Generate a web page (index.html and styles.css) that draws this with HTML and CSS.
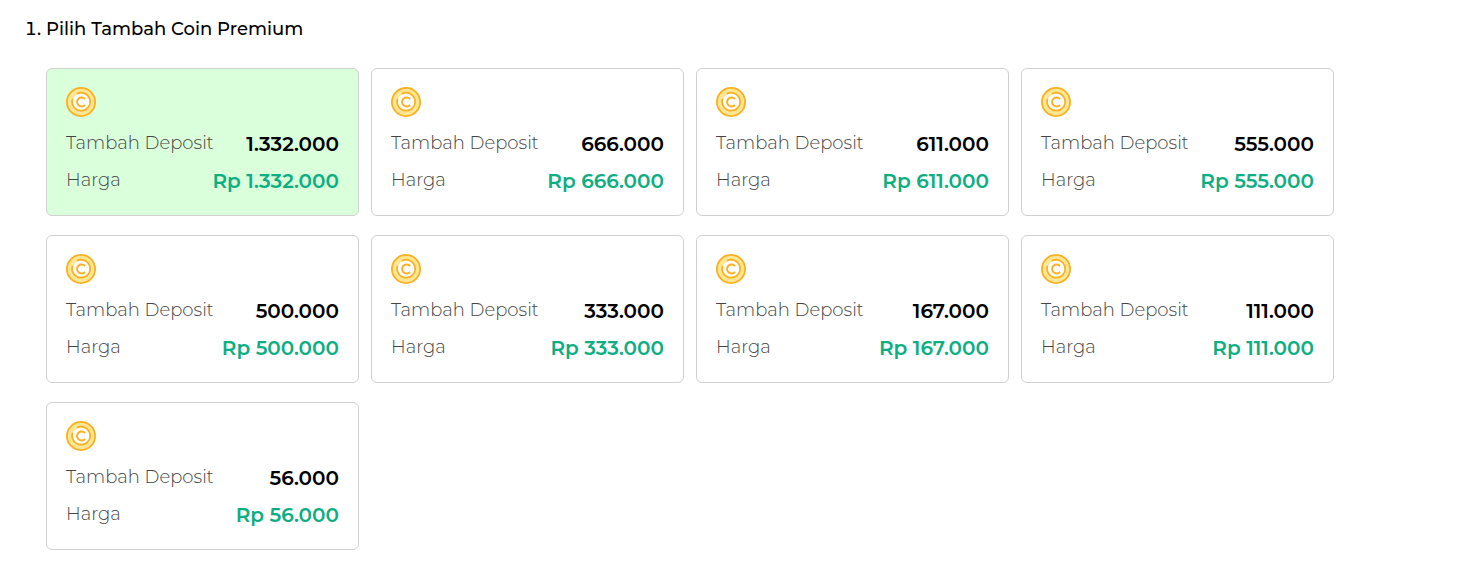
FILE: index.html
```html
<!DOCTYPE html>
<html lang="id">
<head>
  <meta charset="UTF-8" />
  <meta name="viewport" content="width=device-width, initial-scale=1.0"/>
  <title>Tambah Coin Premium</title>
  <link rel="stylesheet" href="styles.css">
</head>
<body>
  <!-- Coin icon, shared by every card -->
  <svg class="sprite" width="0" height="0" aria-hidden="true">
    <symbol id="coin" viewBox="0 0 30 30">
      <circle cx="15" cy="15" r="14.1" fill="#ffe694" stroke="#fbb01f" stroke-width="1.8"/>
      <circle cx="15" cy="15" r="8.6" fill="#fff"/>
      <path d="M10.8 6.8A9 9 0 1 1 6.6 11.8" fill="none" stroke="#fbb01f" stroke-width="1.7"/>
      <path d="M19 12.1A4.5 4.5 0 1 0 19 17.9" fill="none" stroke="#fbb01f" stroke-width="1.9"/>
    </symbol>
  </svg>

  <ol class="steps">
    <li>
      <h1>Pilih Tambah Coin Premium</h1>
      <div class="card-list">
        <button type="button" class="card active" aria-pressed="true">
          <svg class="coin"><use href="#coin"/></svg>
          <span class="row"><span class="label">Tambah Deposit</span><span class="amount">1.332.000</span></span>
          <span class="row"><span class="label">Harga</span><span class="price">Rp 1.332.000</span></span>
        </button>
        <button type="button" class="card" aria-pressed="false">
          <svg class="coin"><use href="#coin"/></svg>
          <span class="row"><span class="label">Tambah Deposit</span><span class="amount">666.000</span></span>
          <span class="row"><span class="label">Harga</span><span class="price">Rp 666.000</span></span>
        </button>
        <button type="button" class="card" aria-pressed="false">
          <svg class="coin"><use href="#coin"/></svg>
          <span class="row"><span class="label">Tambah Deposit</span><span class="amount">611.000</span></span>
          <span class="row"><span class="label">Harga</span><span class="price">Rp 611.000</span></span>
        </button>
        <button type="button" class="card" aria-pressed="false">
          <svg class="coin"><use href="#coin"/></svg>
          <span class="row"><span class="label">Tambah Deposit</span><span class="amount">555.000</span></span>
          <span class="row"><span class="label">Harga</span><span class="price">Rp 555.000</span></span>
        </button>
        <button type="button" class="card" aria-pressed="false">
          <svg class="coin"><use href="#coin"/></svg>
          <span class="row"><span class="label">Tambah Deposit</span><span class="amount">500.000</span></span>
          <span class="row"><span class="label">Harga</span><span class="price">Rp 500.000</span></span>
        </button>
        <button type="button" class="card" aria-pressed="false">
          <svg class="coin"><use href="#coin"/></svg>
          <span class="row"><span class="label">Tambah Deposit</span><span class="amount">333.000</span></span>
          <span class="row"><span class="label">Harga</span><span class="price">Rp 333.000</span></span>
        </button>
        <button type="button" class="card" aria-pressed="false">
          <svg class="coin"><use href="#coin"/></svg>
          <span class="row"><span class="label">Tambah Deposit</span><span class="amount">167.000</span></span>
          <span class="row"><span class="label">Harga</span><span class="price">Rp 167.000</span></span>
        </button>
        <button type="button" class="card" aria-pressed="false">
          <svg class="coin"><use href="#coin"/></svg>
          <span class="row"><span class="label">Tambah Deposit</span><span class="amount">111.000</span></span>
          <span class="row"><span class="label">Harga</span><span class="price">Rp 111.000</span></span>
        </button>
        <button type="button" class="card" aria-pressed="false">
          <svg class="coin"><use href="#coin"/></svg>
          <span class="row"><span class="label">Tambah Deposit</span><span class="amount">56.000</span></span>
          <span class="row"><span class="label">Harga</span><span class="price">Rp 56.000</span></span>
        </button>
      </div>
    </li>
  </ol>

  <script>
    const cards = document.querySelectorAll('.card');

    // Only one card can be selected
    cards.forEach((card) => {
      card.addEventListener('click', () => {
        cards.forEach((c) => {
          c.classList.toggle('active', c === card);
          c.setAttribute('aria-pressed', c === card);
        });
      });
    });
  </script>
</body>
</html>
```
FILE: styles.css
```css
* {
  box-sizing: border-box;
}

body {
  font-family: Montserrat, Inter, sans-serif;
  background: #fff;
  color: #000;
  margin: 0;
}

.sprite {
  display: block;
}

.steps {
  margin: 0;
  padding: 16px 137px 26px 46px;
  font-size: 18px;
  font-weight: 500;
  line-height: 26px;
}

h1 {
  font-size: 18px;
  font-weight: 500;
  margin: 0 0 26px;
}

.card-list {
  display: grid;
  grid-template-columns: repeat(auto-fill, minmax(280px, 1fr));
  gap: 19px 12px;
}

.card {
  display: flex;
  flex-direction: column;
  gap: 7px;
  background: #fff;
  border: 1px solid #d0d0d0;
  border-radius: 6px;
  padding: 18px 19px 19px;
  font-family: inherit;
  text-align: left;
  cursor: pointer;
}

.card.active {
  background: #d9ffdb;
}

.coin {
  width: 30px;
  height: 30px;
  margin-bottom: 5px;
}

.row {
  display: flex;
  justify-content: space-between;
  align-self: stretch;
  line-height: 30px;
}

.label {
  color: #444;
  font-size: 18px;
  font-weight: 300;
  line-height: 28px;
}

.amount,
.price {
  color: #000;
  font-size: 20px;
  font-weight: 600;
}

.price {
  color: #0eae83;
}
```
